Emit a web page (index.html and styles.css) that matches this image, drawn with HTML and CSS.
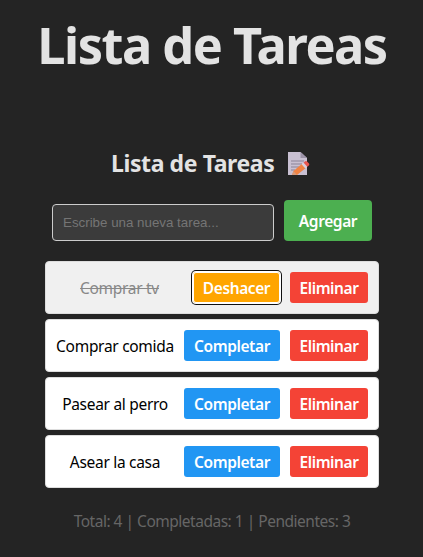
FILE: index.html
```
<!DOCTYPE html>
<html lang="es">
<head>
<meta charset="utf-8">
<title>Lista de Tareas</title>
<link rel="stylesheet" href="styles.css">
</head>
<body>
<main class="app">
  <h1 class="title"><span>Lista de Tareas</span></h1>
  <h2 class="subtitle"><span>Lista de Tareas</span>
    <svg class="memo" viewBox="0 0 24 25" aria-hidden="true">
      <path d="M1 1h12.500l6.500 6v17H1z" fill="#c9c0d2"/>
      <path d="M13.500 1l6.500 6h-6.500z" fill="#9c93a8"/>
      <path d="M4 10h13M4 13h11M4 16h8M4 19h4" stroke="#8b8397" stroke-width="1"/>
      <path d="M5 24l1.500-4L15 12.800l3.800 4.200L10 24z" fill="#f08343"/>
      <path d="M5 24l1.500-4 3.500 4z" fill="#d99a78"/>
      <path d="M14.500 13.200l2-1.700 3.800 4.200-2 1.700z" fill="#d9cfdb"/>
      <path d="M16.500 11.500l1.800-1.300q1-.5 2 .5l1.700 1.700q.8 1-.2 2L20.300 15.700z" fill="#e8564f"/>
    </svg>
  </h2>
  <form class="entry">
    <input class="field" type="text" placeholder="Escribe una nueva tarea...">
    <button class="btn add" type="button">Agregar</button>
  </form>
  <ul class="tasks">
    <li class="task done"><span class="name">Comprar tv</span><button class="btn undo">Deshacer</button><button class="btn remove">Eliminar</button></li>
    <li class="task"><span class="name">Comprar comida</span><button class="btn complete">Completar</button><button class="btn remove">Eliminar</button></li>
    <li class="task"><span class="name">Pasear al perro</span><button class="btn complete">Completar</button><button class="btn remove">Eliminar</button></li>
    <li class="task"><span class="name">Asear la casa</span><button class="btn complete">Completar</button><button class="btn remove">Eliminar</button></li>
  </ul>
  <p class="summary">Total: 4 | Completadas: 1 | Pendientes: 3</p>
</main>
</body>
</html>
```
FILE: styles.css
```
* { box-sizing: border-box; }
body {
  margin: 0;
  background: #242424;
  color: #e3e3e3;
  font-family: "Noto Sans", "Open Sans", sans-serif;
  font-size: 16px;
}
.app {
  width: 334px;
  margin-left: 45px;
  display: flex;
  flex-direction: column;
}
.title {
  margin: 10px -20px 0;
  height: 70px;
  line-height: 70px;
  font-size: 50.5px;
  letter-spacing: -1.5px;
  text-align: center;
  white-space: nowrap;
}
.subtitle {
  margin: 65px 0 0;
  height: 37px;
  line-height: 36px;
  padding-left: 66px;
  display: flex;
  align-items: flex-start;
  gap: 13px;
  font-size: 23px;
  letter-spacing: -0.4px;
  white-space: nowrap;
}
.memo { width: 24px; height: 25px; margin-top: 6px; flex: none; }
.entry {
  display: flex;
  align-items: flex-end;
  gap: 10px;
  margin: 18px 7px 20px;
}
.field {
  width: 222px;
  height: 37px;
  padding: 0 10px;
  border: 1px solid #ccc;
  border-radius: 4px;
  background: #3b3b3b;
  color: #fff;
  font-family: "Liberation Sans", sans-serif;
  font-size: 13.333px;
}
.field::placeholder { color: #757575; opacity: 1; }
.btn {
  flex: none;
  height: 31px;
  padding: 2px 0 0;
  border: 0;
  border-radius: 3px;
  color: #fff;
  font-family: inherit;
  font-size: 15.500px;
  font-weight: 600;
  line-height: 29px;
  letter-spacing: -0.4px;
  white-space: nowrap;
}
.add { width: 88px; height: 41px; border-radius: 4px; background: #4caf50; }
.tasks {
  list-style: none;
  margin: 0;
  padding: 0;
  display: flex;
  flex-direction: column;
  gap: 5px;
}
.task {
  height: 53px;
  display: flex;
  align-items: center;
  gap: 10px;
  padding: 0 10px;
  border: 1px solid #ddd;
  border-radius: 4px;
  background: #fff;
  color: #000;
}
.done { background: #f0f0f0; color: #888; }
.done .name { text-decoration: line-through; }
.name {
  flex: 1;
  text-align: center;
  font-size: 15.500px;
  letter-spacing: -0.3px;
  white-space: nowrap;
}
.complete { width: 96px; background: #2196f3; }
.remove { width: 78px; background: #f44336; }
.undo {
  width: 87px;
  background: #ffa500;
  box-shadow: inset 0 0 0 1px #fff, 0 0 0 1px #fff, 0 0 0 2px #101010;
}
.summary {
  margin: 21px 0 0;
  line-height: 24px;
  text-align: center;
  font-size: 15.500px;
  letter-spacing: -0.49px;
  color: #666;
  white-space: nowrap;
}
```
